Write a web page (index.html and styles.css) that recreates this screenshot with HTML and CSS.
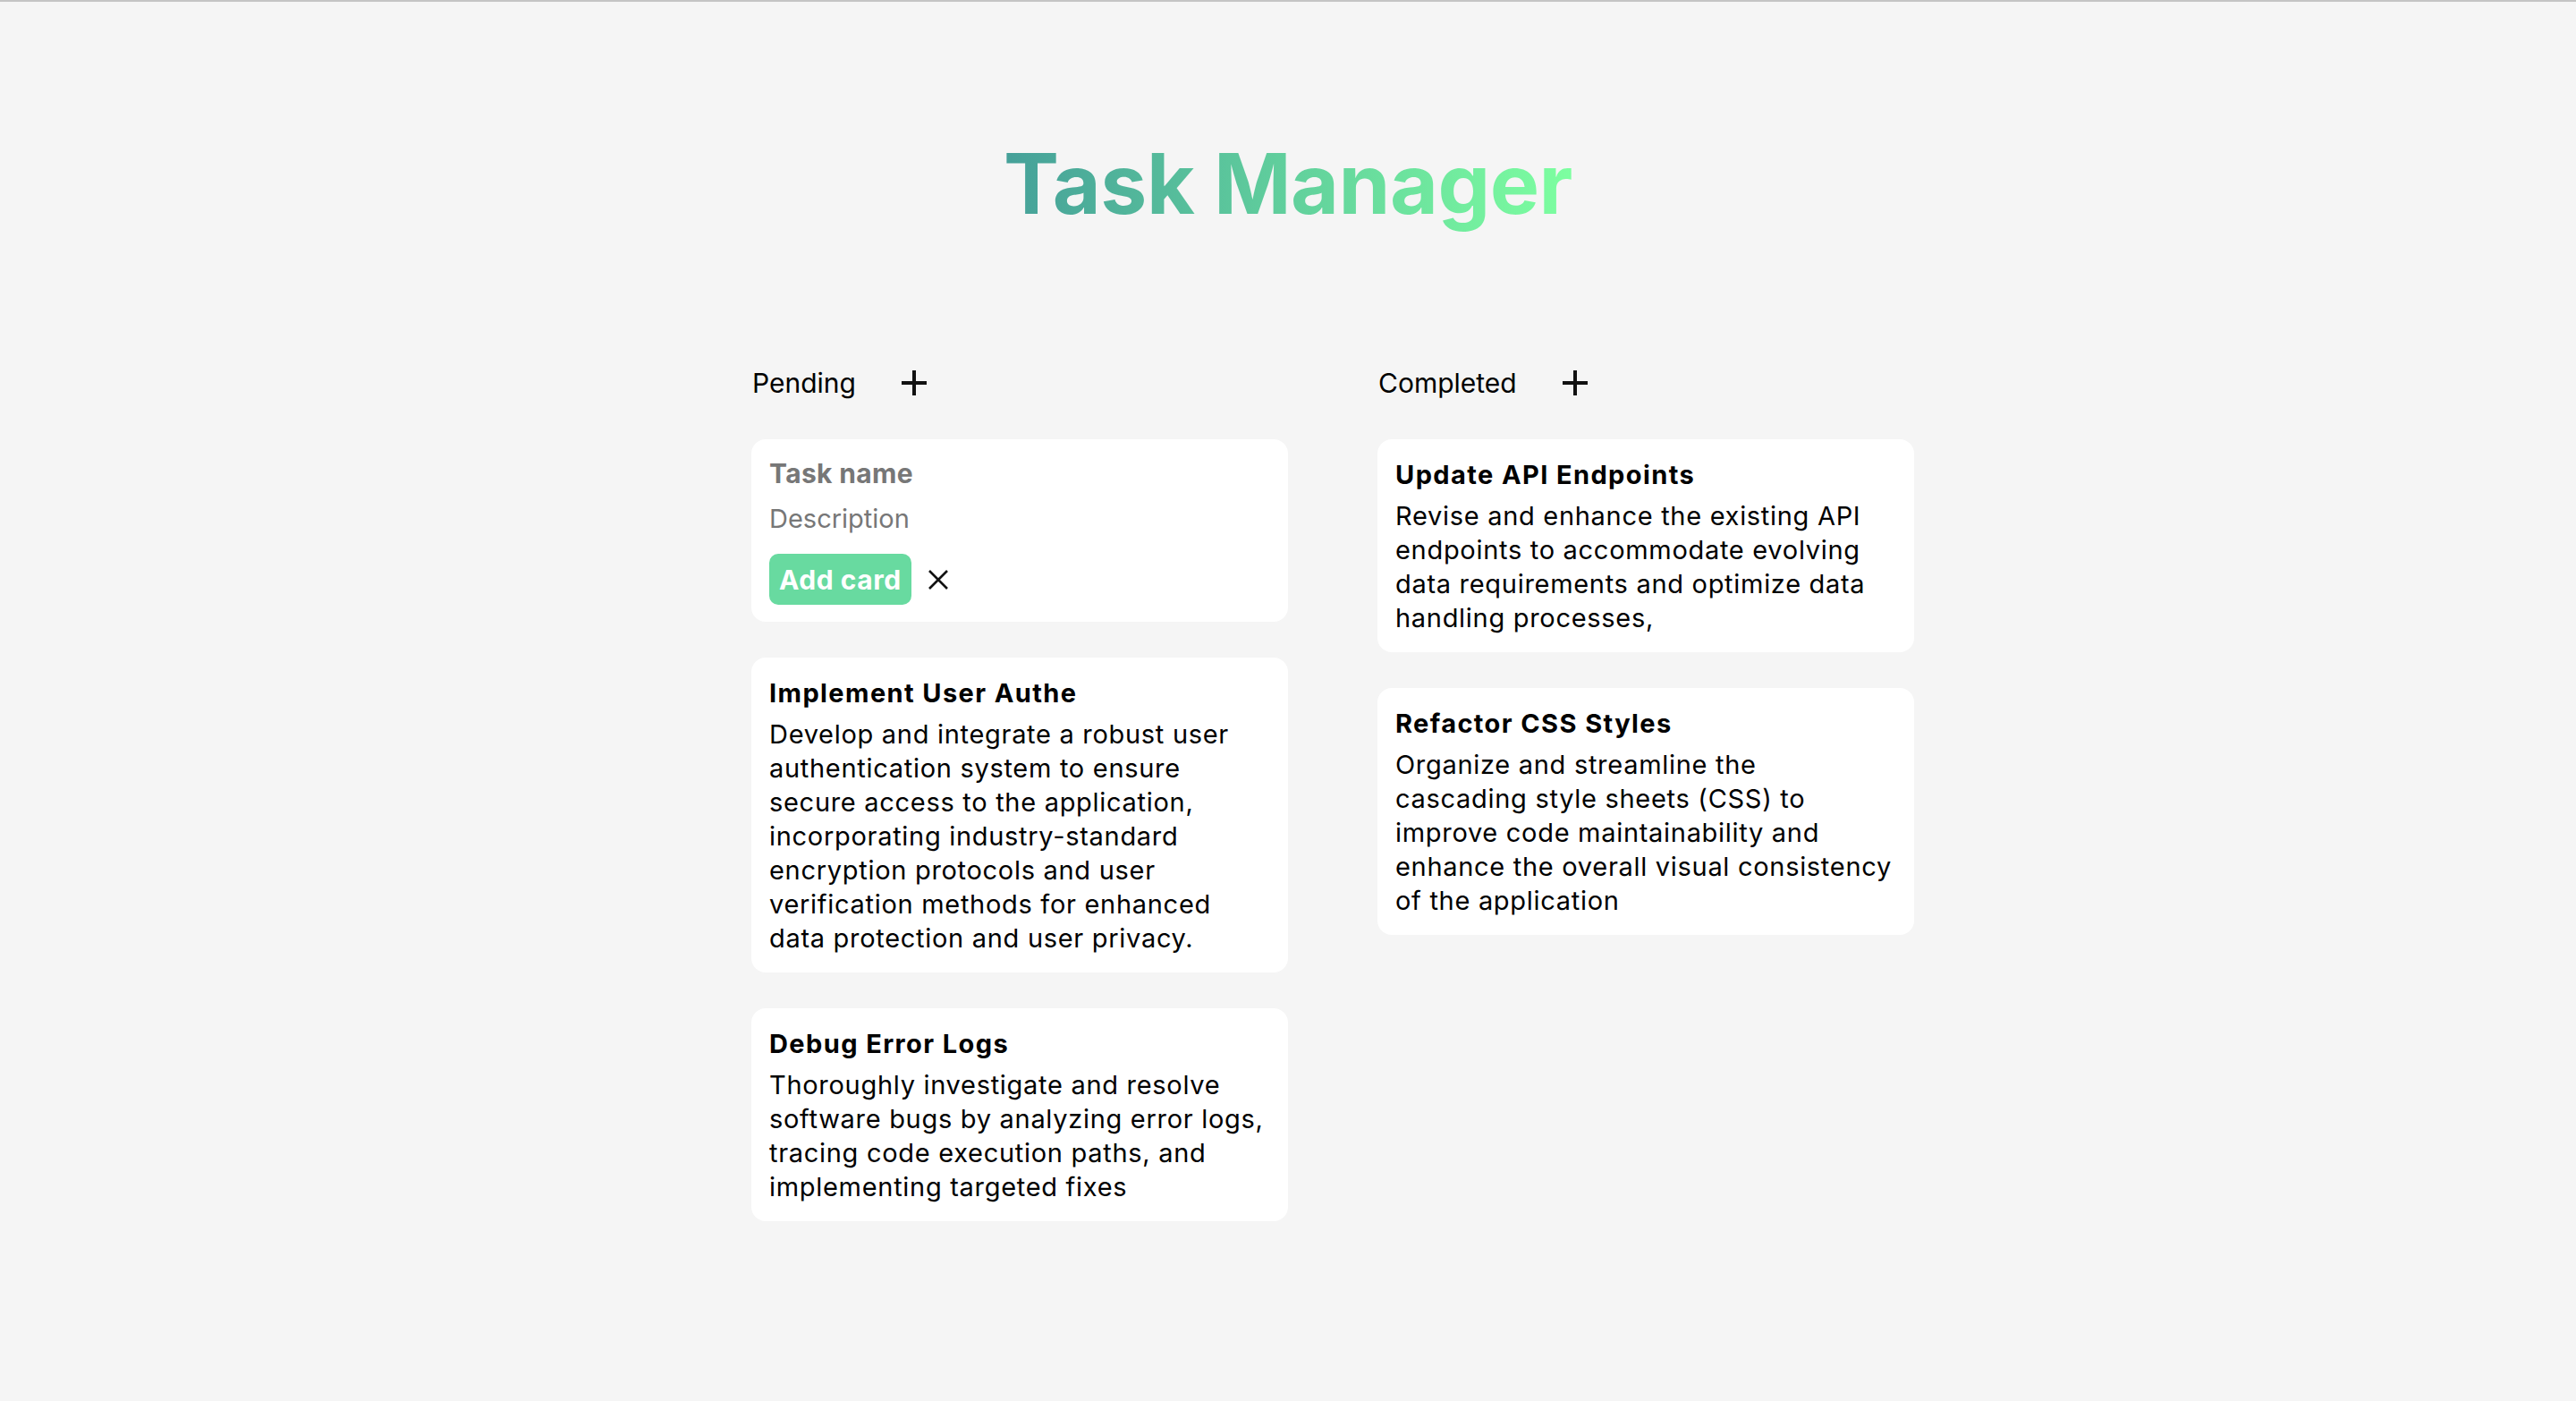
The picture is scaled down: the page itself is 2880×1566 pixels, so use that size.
FILE: index.html
```html
<!DOCTYPE html>
<html lang="en">
<head>
<meta charset="utf-8">
<title>Task Manager</title>
<link rel="stylesheet" href="styles.css">
</head>
<body>
<div class="app">
  <h1 class="title"><span class="title-text">Task Manager</span></h1>
  <main class="board">
    <section class="column">
      <div class="col-head">
        <span class="col-name">Pending</span>
        <button class="add-btn" type="button" aria-label="Add task">
          <svg viewBox="0 0 30 30" width="30" height="30"><path d="M15 1v28M1 15h28" stroke="#111" stroke-width="4" fill="none"/></svg>
        </button>
      </div>
      <div class="cards">
        <form class="card form-card">
          <input class="field field-name" type="text" placeholder="Task name">
          <input class="field field-desc" type="text" placeholder="Description">
          <div class="form-actions">
            <button class="submit" type="button">Add card</button>
            <button class="close" type="button" aria-label="Cancel">
              <svg viewBox="0 0 24 24" width="24" height="24"><path d="M2 2l20 20M22 2L2 22" stroke="#111" stroke-width="2.6" fill="none"/></svg>
            </button>
          </div>
        </form>
        <article class="card">
          <h2 class="card-title">Implement User Authe</h2>
          <p class="card-desc">Develop and integrate a robust user<br>authentication system to ensure<br>secure access to the application,<br>incorporating industry-standard<br>encryption protocols and user<br>verification methods for enhanced<br>data protection and user privacy.</p>
        </article>
        <article class="card">
          <h2 class="card-title">Debug Error Logs</h2>
          <p class="card-desc">Thoroughly investigate and resolve<br>software bugs by analyzing error logs,<br>tracing code execution paths, and<br>implementing targeted fixes</p>
        </article>
      </div>
    </section>
    <section class="column">
      <div class="col-head">
        <span class="col-name">Completed</span>
        <button class="add-btn" type="button" aria-label="Add task">
          <svg viewBox="0 0 30 30" width="30" height="30"><path d="M15 1v28M1 15h28" stroke="#111" stroke-width="4" fill="none"/></svg>
        </button>
      </div>
      <div class="cards">
        <article class="card">
          <h2 class="card-title">Update API Endpoints</h2>
          <p class="card-desc">Revise and enhance the existing API<br>endpoints to accommodate evolving<br>data requirements and optimize data<br>handling processes,</p>
        </article>
        <article class="card">
          <h2 class="card-title">Refactor CSS Styles</h2>
          <p class="card-desc">Organize and streamline the<br>cascading style sheets (CSS) to<br>improve code maintainability and<br>enhance the overall visual consistency<br>of the application</p>
        </article>
      </div>
    </section>
  </main>
</div>
</body>
</html>
```

FILE: styles.css
```css
* { box-sizing: border-box; }
html, body { margin: 0; padding: 0; }
body {
  background: #f5f5f5;
  border-top: 2px solid #c4c4c4;
  font-family: Inter, "Liberation Sans", sans-serif;
  color: #000;
  min-height: 1566px;
}
.app { display: flex; flex-direction: column; align-items: center; }
.title {
  margin: 147px 0 0;
  font-size: 93px;
  line-height: 112px;
  font-weight: 700;
  letter-spacing: -0.5px;
}
.title-text {
  display: inline-block;
  background: linear-gradient(90deg, #45a099 0%, #7dffa0 100%);
  -webkit-background-clip: text;
  background-clip: text;
  color: transparent;
}
.board {
  display: flex;
  width: 1400px;
  margin-top: 147px;
}
.column { width: 600px; margin-left: 100px; }
.col-head {
  display: flex;
  align-items: center;
  gap: 50px;
  height: 40px;
  padding-left: 1px;
}
.col-name { font-size: 30px; line-height: 40px; color: #000; }
.add-btn { border: 0; background: none; padding: 0; display: flex; cursor: pointer; }
.cards { display: flex; flex-direction: column; gap: 40px; margin-top: 43px; }
.card {
  background: #fff;
  border-radius: 16px;
  padding: 19px 20px;
}
.form-card { padding: 20px 20px 19px; }
.field {
  display: block;
  width: 100%;
  border: 0;
  outline: none;
  background: transparent;
  padding: 0;
  height: 36px;
  font-family: inherit;
  line-height: 36px;
  color: #111;
}
.field::placeholder { color: #777; }
.field-name { font-size: 30px; font-weight: 700; letter-spacing: 0.35px; }
.field-desc { font-size: 29px; margin-top: 15px; }
.form-actions { display: flex; align-items: center; gap: 18px; margin-top: 21px; }
.submit {
  height: 57px;
  padding: 0 11px;
  border: 0;
  border-radius: 10px;
  background: #68daa0;
  color: #fff;
  font-family: inherit;
  font-size: 30px;
  font-weight: 700;
  letter-spacing: 0.55px;
}
.close { border: 0; background: none; padding: 0; display: flex; }
.card-title {
  margin: 0;
  font-size: 29px;
  line-height: 42px;
  font-weight: 700;
  letter-spacing: 1.4px;
}
.card-desc {
  margin: 6px 0 0;
  font-size: 29px;
  line-height: 38px;
  letter-spacing: 0.7px;
  white-space: nowrap;
}
```
